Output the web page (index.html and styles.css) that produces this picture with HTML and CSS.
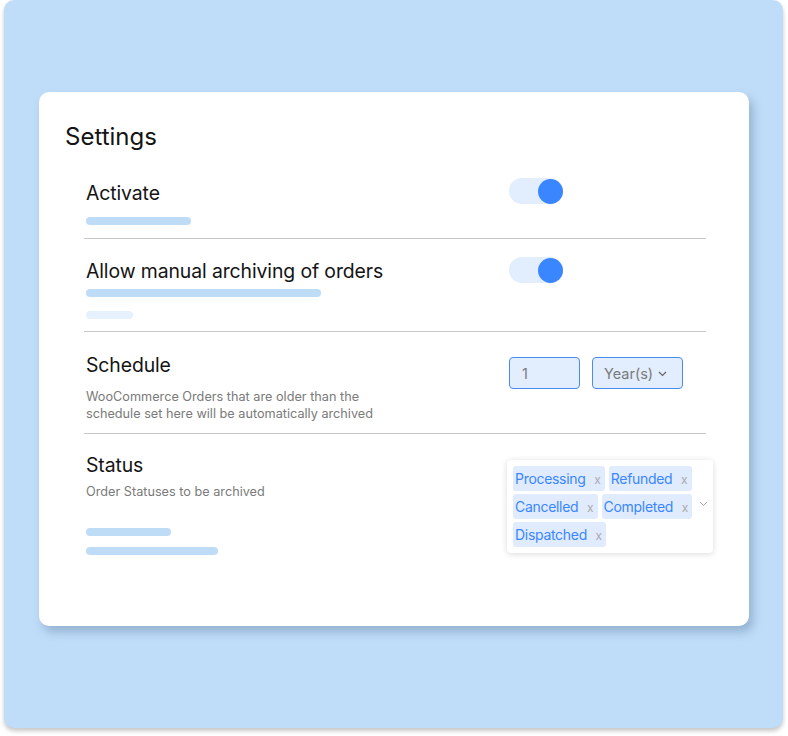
FILE: index.html
```html
<html>
<head>
    <meta charset="UTF-8">
    <title>Settings</title>
    <link rel="stylesheet" href="styles.css">
</head>
<body>
    <div class="panel">
        <div class="card">
            <h1 class="title">Settings</h1>
            <div class="list">

                <div class="row row-activate">
                    <div class="left">
                        <div class="label">Activate</div>
                        <div class="bar bar-a"></div>
                    </div>
                    <div class="right">
                        <div class="toggle"><span class="knob"></span></div>
                    </div>
                </div>

                <div class="row row-manual">
                    <div class="left">
                        <div class="label">Allow manual archiving of orders</div>
                        <div class="bar bar-b"></div>
                        <div class="bar bar-light"></div>
                    </div>
                    <div class="right">
                        <div class="toggle"><span class="knob"></span></div>
                    </div>
                </div>

                <div class="row row-schedule">
                    <div class="left">
                        <div class="label">Schedule</div>
                        <p class="desc">WooCommerce Orders that are older than the schedule set here will be automatically archived</p>
                    </div>
                    <div class="right schedule-fields">
                        <div class="field num">1</div>
                        <div class="field select">Year(s)
                            <svg class="chev" width="9" height="6" viewBox="0 0 9 6"><path d="M1 1l3.5 3.5L8 1" fill="none" stroke="#666" stroke-width="1.2"/></svg>
                        </div>
                    </div>
                </div>

                <div class="row row-status">
                    <div class="left">
                        <div class="label">Status</div>
                        <p class="desc">Order Statuses to be archived</p>
                        <div class="bar bar-c"></div>
                        <div class="bar bar-d"></div>
                    </div>
                    <div class="right">
                        <div class="multi">
                            <div class="tags">
                                <span class="tag">Processing <i>x</i></span>
                                <span class="tag">Refunded <i>x</i></span>
                                <span class="tag">Cancelled <i>x</i></span>
                                <span class="tag">Completed <i>x</i></span>
                                <span class="tag">Dispatched <i>x</i></span>
                            </div>
                            <svg class="multi-chev" width="9" height="6" viewBox="0 0 9 6"><path d="M1 1l3.5 3.5L8 1" fill="none" stroke="#aaa" stroke-width="1"/></svg>
                        </div>
                    </div>
                </div>

            </div>
        </div>
    </div>
</body>
</html>
```
FILE: styles.css
```css
body{margin:0; background:#ffffff; font-family:Inter,"Noto Sans",sans-serif; color:#141414;}

.panel{margin:0 5px 0 4px; height:728px; background:#bfddf8; border-radius:10px; box-shadow:0 3px 4px rgba(0,0,0,0.22); padding-top:92px; box-sizing:border-box; overflow:hidden;}

.card{margin-left:35px; width:710px; height:534px; background:#fff; border-radius:10px; box-shadow:4px 6px 10px rgba(70,100,140,0.35); padding:31px 0 0 26px; box-sizing:border-box;}

.title{margin:0 0 27px 0; font-size:24px; line-height:28px; font-weight:400;}

.list{margin-left:19px; width:622px;}

.row{display:flex; border-bottom:1px solid #c8c8c8; padding-left:2px;}
.row:last-child{border-bottom:none;}
.left{width:423px; flex-shrink:0;}
.right{flex:1; min-width:0;}

.label{font-size:19.4px; line-height:24px; letter-spacing:-0.1px; margin-top:3px;}

.bar{height:8px; border-radius:4px; background:#bfdcf7;}
.bar-a{width:105px; margin-top:12px;}
.bar-b{width:235px; margin-top:6px;}
.bar-light{width:47px; margin-top:14px; background:#e6f1fd;}
.bar-c{width:85px; margin-top:28px;}
.bar-d{width:132px; margin-top:11px;}

.row-activate{padding-bottom:13px;}
.row-manual{padding-top:17px; padding-bottom:12px;}
.row-schedule{padding-top:18px; padding-bottom:11px;}
.row-status{padding-top:16px;}

.toggle{width:54px; height:26px; border-radius:13px; background:#e2edfd; display:flex; justify-content:flex-end; align-items:center;}
.knob{width:25px; height:25px; border-radius:50%; background:#3a86ff;}
.row-manual .toggle{margin-top:1px;}

.desc{margin:11px 0 0 0; max-width:300px; font-size:12.7px; line-height:17px; color:#7a7a7a;}
.row-status .desc{margin-top:6px;}

.schedule-fields{display:flex; gap:12px; padding-top:7px; align-items:flex-start;}
.field{height:32px; box-sizing:border-box; border:1px solid #4a8cf5; border-radius:4px; background:#e2edfd; color:#7a7a7a; font-size:14.5px; display:flex; align-items:center;}
.num{width:71px; padding-left:12px;}
.select{width:91px; padding-left:11px;}
.chev{margin-left:5px; margin-top:2px;}

.multi{margin:10px 0 0 -2px; width:206px; box-sizing:border-box; padding:6px 4px 6px 6px; background:#fff; border-radius:4px; box-shadow:0 1px 6px rgba(0,0,0,0.15); display:flex; align-items:center;}
.tags{width:183px; flex-shrink:0; display:flex; flex-wrap:wrap; gap:3px 4px;}
.tag{height:25px; line-height:25px; padding:0 4px 0 2px; border-radius:3px; background:#e0ecfd; color:#3a86ff; font-size:14px; letter-spacing:-0.3px; white-space:nowrap;}
.tag i{font-style:normal; color:#aaa; font-size:12px; margin-left:5px; letter-spacing:0;}
.multi-chev{margin-left:3px; margin-top:-6px;}
```
